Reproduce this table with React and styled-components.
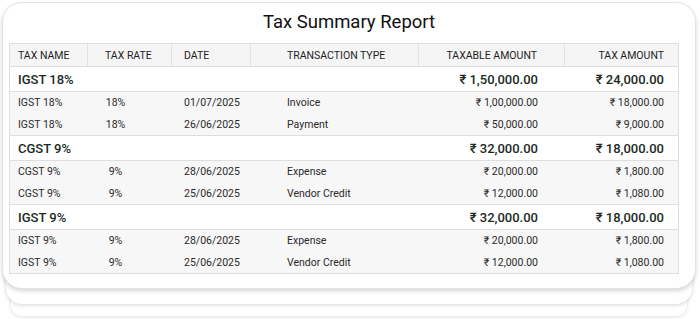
import styled, { createGlobalStyle } from 'styled-components'

const GlobalStyle = createGlobalStyle`
	html, body {
		margin: 0;
		padding: 0;
		background: #ffffff;
		font-family: Roboto, "Liberation Sans", sans-serif;
	}
`

const COLUMNS = [
	{ key: 'name', label: 'TAX NAME', width: '78px', headPad: '0 8px', cellPad: '0 8px', align: 'left' },
	{ key: 'rate', label: 'TAX RATE', width: '84px', headPad: '0 17px', cellPad: '0 29px 0 0', align: 'center' },
	{ key: 'date', label: 'DATE', width: '79px', headPad: '0 12px', cellPad: '0 12px', align: 'left' },
	{ key: 'type', label: 'TRANSACTION TYPE', width: '168px', headPad: '0 36px', cellPad: '0 36px', align: 'left' },
	{ key: 'taxable', label: 'TAXABLE AMOUNT', width: '146px', headPad: '0 27px 0 0', cellPad: '0 27px 0 0', align: 'right' },
	{ key: 'tax', label: 'TAX AMOUNT', width: '1fr', headPad: '0 14px 0 0', cellPad: '0 14px 0 0', align: 'right' },
]

const GROUPS = [
	{
		name: 'IGST 18%',
		taxable: '₹ 1,50,000.00',
		tax: '₹ 24,000.00',
		rows: [
			{ name: 'IGST 18%', rate: '18%', date: '01/07/2025', type: 'Invoice', taxable: '₹ 1,00,000.00', tax: '₹ 18,000.00' },
			{ name: 'IGST 18%', rate: '18%', date: '26/06/2025', type: 'Payment', taxable: '₹ 50,000.00', tax: '₹ 9,000.00' },
		],
	},
	{
		name: 'CGST 9%',
		taxable: '₹ 32,000.00',
		tax: '₹ 18,000.00',
		rows: [
			{ name: 'CGST 9%', rate: '9%', date: '28/06/2025', type: 'Expense', taxable: '₹ 20,000.00', tax: '₹ 1,800.00' },
			{ name: 'CGST 9%', rate: '9%', date: '25/06/2025', type: 'Vendor Credit', taxable: '₹ 12,000.00', tax: '₹ 1,080.00' },
		],
	},
	{
		name: 'IGST 9%',
		taxable: '₹ 32,000.00',
		tax: '₹ 18,000.00',
		rows: [
			{ name: 'IGST 9%', rate: '9%', date: '28/06/2025', type: 'Expense', taxable: '₹ 20,000.00', tax: '₹ 1,800.00' },
			{ name: 'IGST 9%', rate: '9%', date: '25/06/2025', type: 'Vendor Credit', taxable: '₹ 12,000.00', tax: '₹ 1,080.00' },
		],
	},
]

const gridColumns = COLUMNS.map(c => c.width).join(' ')

const Page = styled.div`
	width: 700px;
	height: 319px;
	padding: 2px 0 0 2px;
	box-sizing: border-box;
	background: #ffffff;
	overflow: hidden;
`

// the two sheets peeking out below the card are drawn as extra box-shadow layers
const Card = styled.div`
	box-sizing: border-box;
	width: 694px;
	height: 287px;
	padding: 7px 0 0 6px;
	background: #ffffff;
	border: 1px solid #e4e4e4;
	border-radius: 20px;
	box-shadow:
		0 2px 4px rgba(0, 0, 0, 0.16),
		0 19px 0 -4px #ffffff,
		0 20px 4px -4px rgba(0, 0, 0, 0.17),
		0 36px 0 -9px #ffffff,
		0 37px 4px -9px rgba(0, 0, 0, 0.13);
`

const Title = styled.h1`
	margin: 0 0 9px;
	padding-right: 6px;
	font-size: 18.5px;
	line-height: 24px;
	font-weight: 400;
	color: #111111;
	text-align: center;
`

const Table = styled.div`
	box-sizing: border-box;
	width: 670px;
	border: 1px solid #dedede;
`

const Row = styled.div`
	display: grid;
	grid-template-columns: ${gridColumns};
	background: ${({ $variant }) => ($variant === 'group' ? '#ffffff' : $variant === 'head' ? '#f5f5f5' : '#f7f7f7')};
	border-bottom: ${({ $divider }) => ($divider ? '1px solid #dedede' : 'none')};
`

const justify = align => (align === 'right' ? 'flex-end' : align === 'center' ? 'center' : 'flex-start')

const HeadCell = styled.div`
	box-sizing: border-box;
	height: 22px;
	display: flex;
	align-items: center;
	justify-content: ${({ $align }) => justify($align)};
	padding: ${({ $pad }) => $pad};
	border-right: ${({ $last }) => ($last ? 'none' : '1px solid #e2e2e2')};
	font-size: 10.5px;
	color: #1e1e1e;
	white-space: nowrap;
`

const Cell = styled.div`
	box-sizing: border-box;
	height: 21.5px;
	display: flex;
	align-items: center;
	justify-content: ${({ $align }) => justify($align)};
	padding: ${({ $pad }) => $pad};
	font-size: 10.5px;
	color: #2a2a2a;
	white-space: nowrap;
`

const GroupCell = styled.div`
	box-sizing: border-box;
	height: 24px;
	display: flex;
	align-items: center;
	justify-content: ${({ $align }) => justify($align)};
	padding: ${({ $pad }) => $pad};
	font-size: 13px;
	font-weight: 500;
	color: #1b2a24;
	white-space: nowrap;
`

const GroupName = styled(GroupCell)`
	grid-column: 1 / span 4;
`

export default function App() {
	const [, , , , taxableCol, taxCol] = COLUMNS

	return (
		<>
			<GlobalStyle />
			<Page>
				<Card>
					<Title>Tax Summary Report</Title>
					<Table>
						<Row $variant="head" $divider>
							{COLUMNS.map((col, i) => (
								<HeadCell key={col.key} $pad={col.headPad} $align={col.align === 'center' ? 'left' : col.align} $last={i === COLUMNS.length - 1}>
									{col.label}
								</HeadCell>
							))}
						</Row>
						{GROUPS.map((group, gi) => (
							<div key={group.name + gi}>
								<Row $variant="group" $divider>
									<GroupName $pad="0 8px">{group.name}</GroupName>
									<GroupCell $align="right" $pad={taxableCol.cellPad}>{group.taxable}</GroupCell>
									<GroupCell $align="right" $pad={taxCol.cellPad}>{group.tax}</GroupCell>
								</Row>
								{group.rows.map((row, ri) => (
									<Row key={ri} $divider={ri === group.rows.length - 1 && gi < GROUPS.length - 1}>
										{COLUMNS.map(col => (
											<Cell key={col.key} $pad={col.cellPad} $align={col.align}>
												{row[col.key]}
											</Cell>
										))}
									</Row>
								))}
							</div>
						))}
					</Table>
				</Card>
			</Page>
		</>
	)
}
